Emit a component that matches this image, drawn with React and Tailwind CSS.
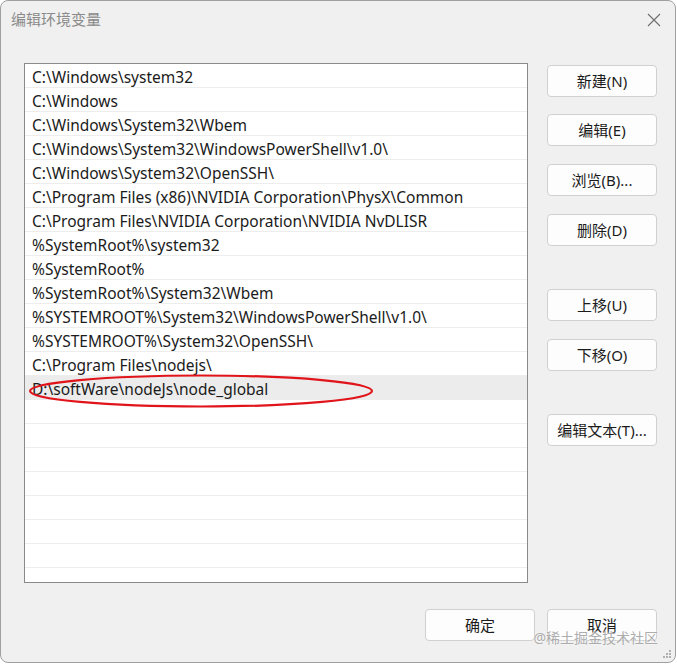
import React from 'react';

const PATHS = [
  'C:\\Windows\\system32',
  'C:\\Windows',
  'C:\\Windows\\System32\\Wbem',
  'C:\\Windows\\System32\\WindowsPowerShell\\v1.0\\',
  'C:\\Windows\\System32\\OpenSSH\\',
  'C:\\Program Files (x86)\\NVIDIA Corporation\\PhysX\\Common',
  'C:\\Program Files\\NVIDIA Corporation\\NVIDIA NvDLISR',
  '%SystemRoot%\\system32',
  '%SystemRoot%',
  '%SystemRoot%\\System32\\Wbem',
  '%SYSTEMROOT%\\System32\\WindowsPowerShell\\v1.0\\',
  '%SYSTEMROOT%\\System32\\OpenSSH\\',
  'C:\\Program Files\\nodejs\\',
  'D:\\softWare\\nodeJs\\node_global',
];

const SELECTED = 13;
const TOTAL_ROWS = 22;

function WinButton({ children, className = '' }) {
  return (
    <button className={`w-[110px] h-[32px] shrink-0 rounded-[4px] border border-[#d0d0d0] bg-[#fdfdfd] text-[15px] text-[#1b1b1b] flex items-center justify-center ${className}`}>
      {children}
    </button>
  );
}

export default function App() {
  const rows = Array.from({ length: TOTAL_ROWS }, (_, i) => PATHS[i] ?? '');

  return (
    <div className="w-[677px] h-[664px] bg-white" style={{ fontFamily: '"Noto Sans", "Noto Sans CJK SC", sans-serif' }}>
      <div className="relative w-[676px] h-[663px] bg-[#f0f0f0] border border-[#a0a0a0] rounded-[8px] flex flex-col overflow-hidden">
        {/* title bar */}
        <div className="h-[37px] shrink-0 flex items-center justify-between pl-[10px] pr-[14px]">
          <span className="text-[15px] text-[#8a8a8a] leading-none">编辑环境变量</span>
          <svg width="14" height="14" viewBox="0 0 14 14" className="text-[#6e6e6e]">
            <path d="M1 1 L13 13 M13 1 L1 13" stroke="currentColor" strokeWidth="1.1" fill="none" />
          </svg>
        </div>

        <div className="flex pl-[23px] pt-[25px]">
          {/* path list */}
          <div className="relative w-[504px] h-[520px] shrink-0 border border-[#8a8a8a] bg-white overflow-hidden">
            {rows.map((p, i) => (
              <div
                key={i}
                className={`h-[24px] pl-[7px] pt-[4px] leading-[18px] border-b border-[#ededed] text-[15.5px] text-[#1b1b1b] whitespace-nowrap ${i === SELECTED ? 'bg-[#ececec]' : ''}`}
              >
                {p}
              </div>
            ))}
            {/* red annotation */}
            <svg className="absolute left-[2px] top-[310px]" width="350" height="36" viewBox="0 0 350 36">
              <ellipse cx="174" cy="17" rx="171" ry="15.5" fill="none" stroke="#e0141a" strokeWidth="2.2" />
            </svg>
          </div>

          {/* side buttons */}
          <div className="flex flex-col ml-[19px] pt-[2px]">
            <WinButton>新建(N)</WinButton>
            <WinButton className="mt-[17px]">编辑(E)</WinButton>
            <WinButton className="mt-[18px]">浏览(B)...</WinButton>
            <WinButton className="mt-[18px]">删除(D)</WinButton>
            <WinButton className="mt-[43px]">上移(U)</WinButton>
            <WinButton className="mt-[18px]">下移(O)</WinButton>
            <WinButton className="mt-[43px]">编辑文本(T)...</WinButton>
          </div>
        </div>

        {/* footer */}
        <div className="flex justify-end gap-[12px] pr-[18px] pt-[26px]">
          <WinButton>确定</WinButton>
          <WinButton>取消</WinButton>
        </div>

        {/* watermark */}
        <span
          className="absolute right-[17px] bottom-[17px] text-[14px] text-[#9a9a9a] opacity-80 leading-none"
          style={{ textShadow: '0 0 2px #fff, 0 0 2px #fff' }}
        >
          @稀土掘金技术社区
        </span>

        {/* resize grip */}
        <svg className="absolute right-[3px] bottom-[3px]" width="10" height="10" viewBox="0 0 10 10">
          <rect x="7" y="1" width="2" height="2" fill="#b0b0b0" />
          <rect x="4" y="4" width="2" height="2" fill="#b0b0b0" />
          <rect x="7" y="4" width="2" height="2" fill="#b0b0b0" />
          <rect x="1" y="7" width="2" height="2" fill="#b0b0b0" />
          <rect x="4" y="7" width="2" height="2" fill="#b0b0b0" />
          <rect x="7" y="7" width="2" height="2" fill="#b0b0b0" />
        </svg>
      </div>
    </div>
  );
}
